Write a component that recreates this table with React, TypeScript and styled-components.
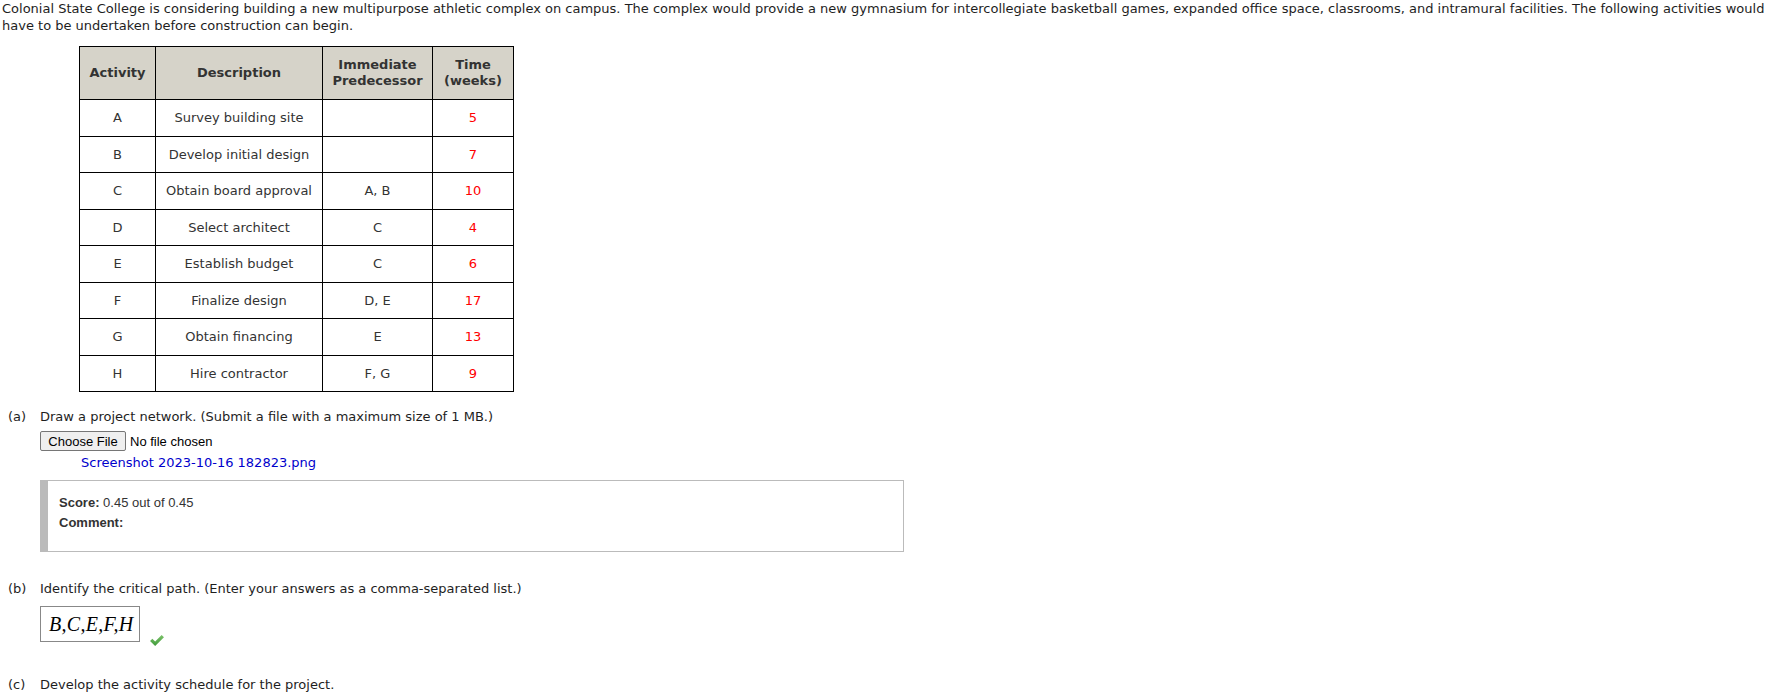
import React from "react";
import styled, { createGlobalStyle } from "styled-components";

const Global = createGlobalStyle`
  html, body { margin: 0; padding: 0; background: #fff; }
  body {
    font-family: "DejaVu Sans", Verdana, sans-serif;
    font-size: 13px;
    color: #1e1e1e;
  }
`;

const Page = styled.div`
  width: 1767px;
  height: 697px;
  overflow: hidden;
`;

const Intro = styled.p`
  margin: 0;
  padding: 0 0 0 2px;
  line-height: 17px;
`;

const Table = styled.table`
  border-collapse: collapse;
  margin: 12px 0 0 79px;
  table-layout: fixed;
  width: 434px;
  color: #333;
`;

const Th = styled.th<{ $w: number }>`
  width: ${(p) => p.$w}px;
  height: 52px;
  background: #d6d3c9;
  border: 1px solid #000;
  font-weight: bold;
  font-size: 13px;
  line-height: 16px;
  text-align: center;
  padding: 0;
  color: #333;
`;

const Row = styled.tr`
  height: 36.5px;
`;

const Td = styled.td<{ $red?: boolean }>`
  border: 1px solid #000;
  text-align: center;
  padding: 0 2px;
  white-space: nowrap;
  color: ${(p) => (p.$red ? "#f00" : "#333")};
`;

const Part = styled.div<{ $top: number }>`
  display: flex;
  margin-top: ${(p) => p.$top}px;
  line-height: 17px;
`;

const Label = styled.span`
  width: 40px;
  padding-left: 8px;
  flex: none;
  box-sizing: border-box;
`;

const PartBody = styled.div`
  display: flex;
  flex-direction: column;
`;

const FileRow = styled.div`
  display: flex;
  align-items: center;
  margin-top: 6px;
  font-family: "Liberation Sans", Arial, sans-serif;
  font-size: 13px;
  color: #000;
`;

const FileButton = styled.button`
  width: 86px;
  height: 20px;
  padding: 0;
  margin: 0 4px 0 0;
  font-family: "Liberation Sans", Arial, sans-serif;
  font-size: 13px;
  color: #000;
  background: #efefef;
  border: 1px solid #767676;
  border-radius: 2px;
`;

const FileLink = styled.a`
  margin: 3px 0 0 41px;
  color: #0000cc;
  text-decoration: none;
  font-size: 13px;
  line-height: 17px;
`;

const ScoreBox = styled.div`
  display: flex;
  flex-direction: column;
  width: 864px;
  height: 72px;
  margin-top: 9px;
  padding: 12px 0 0 11px;
  box-sizing: border-box;
  border: 1px solid #bbb;
  border-left: 8px solid #bbb;
  font-family: "Liberation Sans", Arial, sans-serif;
  font-size: 13px;
  line-height: 20px;
  color: #333;
`;

const Bold = styled.b`
  font-weight: bold;
`;

const AnswerRow = styled.div`
  display: flex;
  align-items: flex-end;
  margin-top: 9px;
  gap: 9px;
`;

const AnswerBox = styled.div`
  width: 100px;
  height: 36px;
  box-sizing: border-box;
  border: 1px solid #888;
  display: flex;
  align-items: center;
  padding-left: 8px;
  font-family: "Liberation Serif", "Times New Roman", serif;
  font-style: italic;
  font-size: 20px;
  letter-spacing: 0.3px;
  color: #000;
`;

const Check = styled.svg`
  width: 16px;
  height: 13px;
  margin-bottom: -5px;
`;

const rows: [string, string, string, string][] = [
  ["A", "Survey building site", "", "5"],
  ["B", "Develop initial design", "", "7"],
  ["C", "Obtain board approval", "A, B", "10"],
  ["D", "Select architect", "C", "4"],
  ["E", "Establish budget", "C", "6"],
  ["F", "Finalize design", "D, E", "17"],
  ["G", "Obtain financing", "E", "13"],
  ["H", "Hire contractor", "F, G", "9"],
];

export default function App() {
  return (
    <Page>
      <Global />
      <Intro>
        Colonial State College is considering building a new multipurpose athletic complex on campus. The complex would
        provide a new gymnasium for intercollegiate basketball games, expanded office space, classrooms, and intramural
        facilities. The following activities would have to be undertaken before construction can begin.
      </Intro>
      <Table>
        <thead>
          <tr>
            <Th $w={75}>Activity</Th>
            <Th $w={166}>Description</Th>
            <Th $w={109}>
              Immediate
              <br />
              Predecessor
            </Th>
            <Th $w={80}>
              Time
              <br />
              (weeks)
            </Th>
          </tr>
        </thead>
        <tbody>
          {rows.map((r) => (
            <Row key={r[0]}>
              <Td>{r[0]}</Td>
              <Td>{r[1]}</Td>
              <Td>{r[2]}</Td>
              <Td $red>{r[3]}</Td>
            </Row>
          ))}
        </tbody>
      </Table>

      <Part $top={16}>
        <Label>(a)</Label>
        <PartBody>
          <span>Draw a project network. (Submit a file with a maximum size of 1 MB.)</span>
          <FileRow>
            <FileButton type="button">Choose File</FileButton>
            <span>No file chosen</span>
          </FileRow>
          <FileLink href="#">Screenshot 2023-10-16 182823.png</FileLink>
          <ScoreBox>
            <span>
              <Bold>Score:</Bold> 0.45 out of 0.45
            </span>
            <Bold>Comment:</Bold>
          </ScoreBox>
        </PartBody>
      </Part>

      <Part $top={28}>
        <Label>(b)</Label>
        <PartBody>
          <span>Identify the critical path. (Enter your answers as a comma-separated list.)</span>
          <AnswerRow>
            <AnswerBox>B,C,E,F,H</AnswerBox>
            <Check viewBox="0 0 17 14">
              <defs>
                <linearGradient id="ck" x1="0" y1="0" x2="0" y2="1">
                  <stop offset="0" stopColor="#7dc36b" />
                  <stop offset="1" stopColor="#3f9a3a" />
                </linearGradient>
              </defs>
              <path d="M1 7.5 L3.5 5 L6.5 8 L13.5 1 L16 3.5 L6.5 13 Z" fill="url(#ck)" />
            </Check>
          </AnswerRow>
        </PartBody>
      </Part>

      <Part $top={34}>
        <Label>(c)</Label>
        <PartBody>
          <span>Develop the activity schedule for the project.</span>
        </PartBody>
      </Part>
    </Page>
  );
}
